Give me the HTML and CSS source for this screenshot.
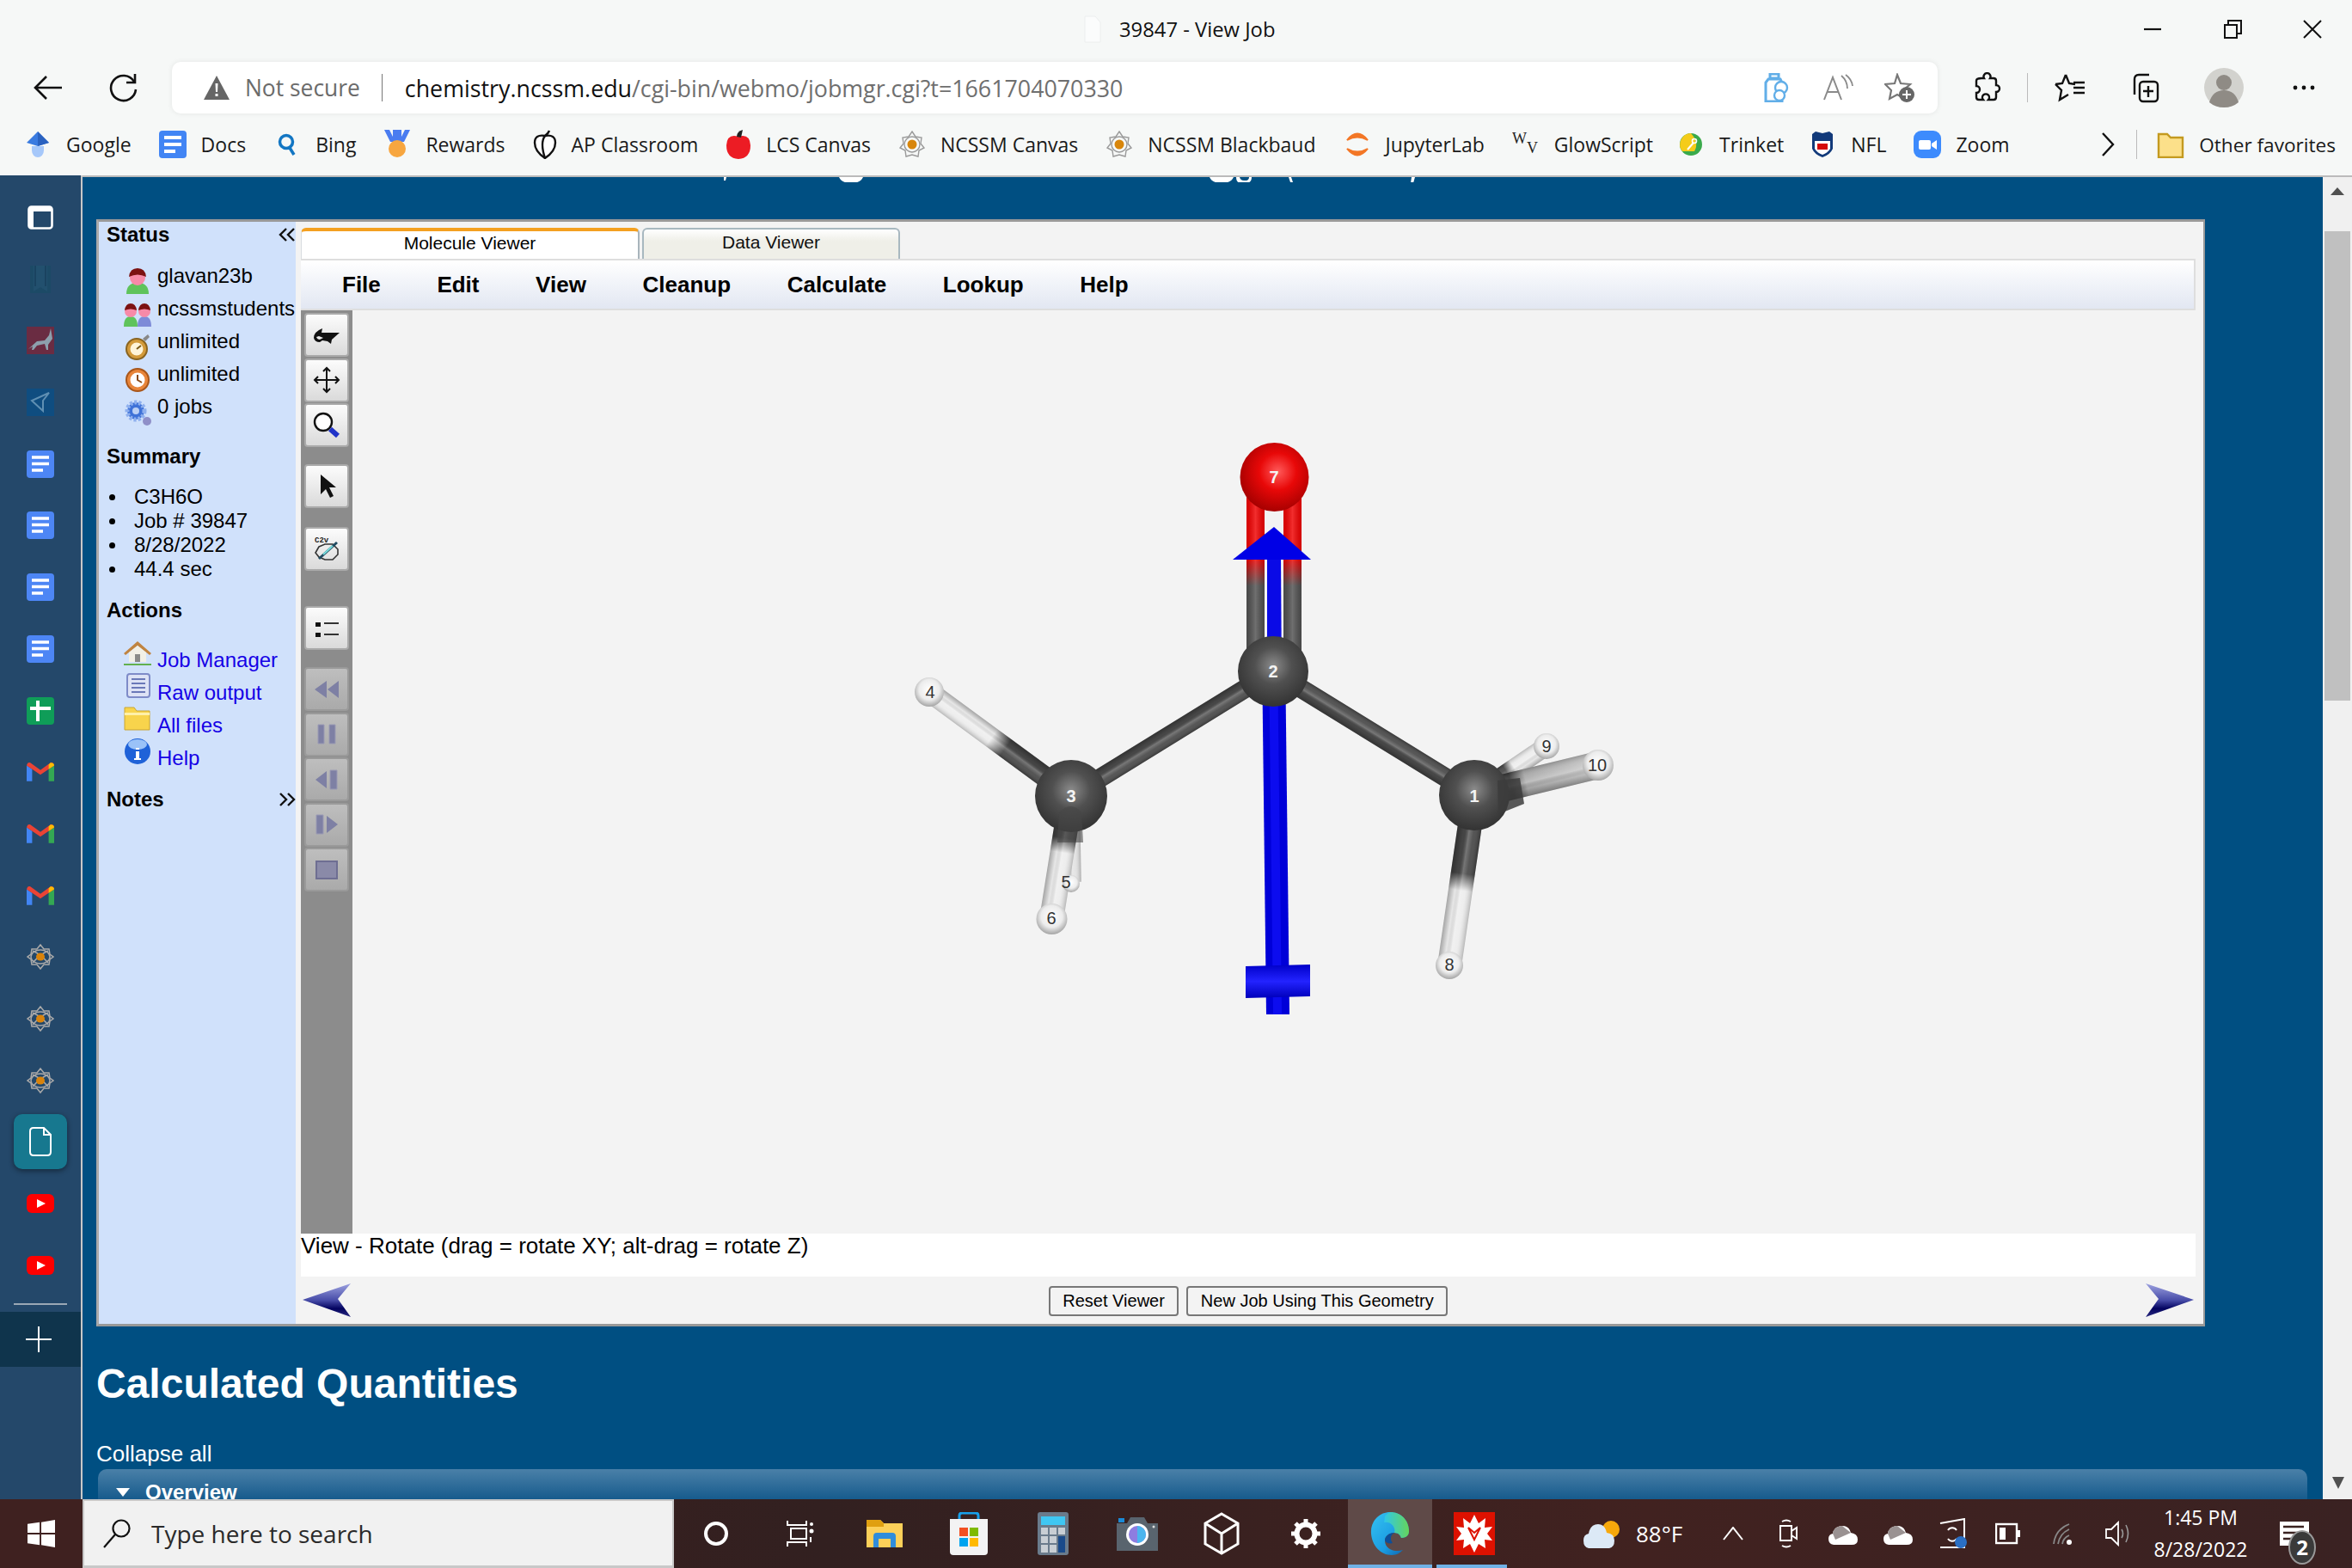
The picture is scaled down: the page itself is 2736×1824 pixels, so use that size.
FILE: index.html
```html
<!DOCTYPE html>
<html lang="en">
<head>
<meta charset="utf-8">
<title>39847 - View Job</title>
<link rel="stylesheet" href="styles.css">
</head>
<body>
<svg class="defs" width="0" height="0">
  <defs>
    <symbol id="docs" viewBox="0 0 32 32"><rect width="32" height="32" rx="4" fill="#4285f4"/><path d="M6 8h20M6 16h20M6 24h13" stroke="#fff" stroke-width="4"/></symbol>
    <symbol id="sdoc" viewBox="0 0 32 32"><rect width="32" height="32" rx="4" fill="#4d86f5"/><path d="M6 8h20M6 15.500h20M6 23h13" stroke="#fff" stroke-width="3.400"/></symbol>
    <symbol id="sheet" viewBox="0 0 32 32"><rect width="32" height="32" rx="4" fill="#0f9d58"/><path d="M4 13h24M13 4v24" stroke="#fff" stroke-width="4"/></symbol>
    <symbol id="gmail" viewBox="0 0 30 22"><path d="M0 21V4l6 4v13H2z" fill="#4285f4"/><path d="M24 21V8l6-4v17l-2 0z" fill="#34a853"/><path d="M0 4q1-4 4-3l11 8 11-8q3-1 4 3l-6 4-9 6-9-6z" fill="#ea4335"/><path d="M24 8l6-4q0-3-4-3l-2 2z" fill="#fbbc04"/></symbol>
    <symbol id="atom" viewBox="0 0 32 32"><g fill="none" stroke="#a9a9a9" stroke-width="1.500"><path d="M16 2l4 5 6 0 1 6 4 3-4 3-1 6-6 0-4 5-4-5-6 0-1-6-4-3 4-3 1-6 6 0z"/><ellipse cx="16" cy="16" rx="11" ry="8"/><path d="M7 9q9 4 18 14M25 9Q16 13 7 23"/></g><ellipse cx="16" cy="16" rx="5" ry="4.500" fill="#d9830b"/></symbol>
    <symbol id="yt" viewBox="0 0 32 22"><rect width="32" height="22" rx="6" fill="#f00"/><path d="M12 6l10 5-10 5z" fill="#fff"/></symbol>
    <symbol id="natom" viewBox="0 0 32 32"><g fill="none" stroke="#9a9a9a" stroke-width="1.400"><path d="M16 1l4 6 7 1-1 7 4 5-6 3-1 7-7-2-7 2-1-7-6-3 4-5-1-7 7-1z"/><circle cx="16" cy="16" r="9"/></g><circle cx="16" cy="16" r="5.500" fill="#d8860b"/></symbol>

    <linearGradient id="acrossC" x1="0" y1="0" x2="0" y2="1"><stop offset="0" stop-color="#000" stop-opacity=".22"/><stop offset=".3" stop-color="#fff" stop-opacity=".08"/><stop offset=".5" stop-color="#fff" stop-opacity=".26"/><stop offset=".72" stop-color="#000" stop-opacity=".02"/><stop offset="1" stop-color="#000" stop-opacity=".3"/></linearGradient>
    <linearGradient id="acrossV" x1="0" y1="0" x2="1" y2="0"><stop offset="0" stop-color="#000" stop-opacity=".1"/><stop offset=".5" stop-color="#fff" stop-opacity=".18"/><stop offset="1" stop-color="#000" stop-opacity=".12"/></linearGradient>
    <linearGradient id="h50" x1="0" y1="0" x2="1" y2="0"><stop offset=".46" stop-color="#464646"/><stop offset=".56" stop-color="#ececec"/></linearGradient>
    <linearGradient id="h38" x1="0" y1="0" x2="1" y2="0"><stop offset=".34" stop-color="#464646"/><stop offset=".46" stop-color="#ececec"/></linearGradient>
    <linearGradient id="h10" x1="0" y1="0" x2="1" y2="0"><stop offset=".3" stop-color="#3a3a3a"/><stop offset=".42" stop-color="#a8a8a8"/><stop offset="1" stop-color="#c8c8c8"/></linearGradient>
    <linearGradient id="dbl" x1="0" y1="0" x2="0" y2="1"><stop offset=".42" stop-color="#ef0000"/><stop offset=".56" stop-color="#505050"/></linearGradient>
    <radialGradient id="carbon" cx=".5" cy=".42" r=".58"><stop offset="0" stop-color="#8b8b8b"/><stop offset=".45" stop-color="#505050"/><stop offset="1" stop-color="#333"/></radialGradient>
    <radialGradient id="oxy" cx=".55" cy=".42" r=".6"><stop offset="0" stop-color="#ff5a5a"/><stop offset=".45" stop-color="#e80808"/><stop offset="1" stop-color="#a40000"/></radialGradient>
    <radialGradient id="hyd" cx=".5" cy=".42" r=".58"><stop offset="0" stop-color="#fff"/><stop offset=".6" stop-color="#ececec"/><stop offset="1" stop-color="#a4a4a4"/></radialGradient>
    <linearGradient id="cross" x1="0" y1="0" x2="0" y2="1"><stop offset="0" stop-color="#0000c8"/><stop offset=".5" stop-color="#2323ff"/><stop offset="1" stop-color="#0000bb"/></linearGradient>
    <linearGradient id="navy" x1="0" y1="0" x2="0" y2="1"><stop offset="0" stop-color="#9da2e0"/><stop offset=".5" stop-color="#474ca8"/><stop offset=".75" stop-color="#03035f"/><stop offset="1" stop-color="#2a2a80"/></linearGradient>
    <linearGradient id="edgeg" x1="0" y1="0" x2="1" y2="1"><stop offset="0" stop-color="#35c1f1"/><stop offset=".6" stop-color="#1b9de2"/><stop offset="1" stop-color="#0c59a4"/></linearGradient>
    <linearGradient id="edgeh" x1="0" y1="0" x2="1" y2="0"><stop offset="0" stop-color="#2fc7e8"/><stop offset="1" stop-color="#66d55a"/></linearGradient>
  </defs>
</svg>

<header class="titlebar">
  <div class="title-center">
    <svg class="page-ic" width="20" height="32" viewBox="0 0 20 32"><path d="M1 1h12l6 7v23H1z" fill="#fbfcfc" stroke="#eceeee"/></svg>
    <span>39847 - View Job</span>
  </div>
  <div class="winctl">
    <svg width="24" height="24" viewBox="0 0 24 24"><path d="M2 12h20" stroke="#111" stroke-width="2.200"/></svg>
    <svg width="24" height="24" viewBox="0 0 24 24"><path d="M3 7h14v15H3zM7 7V2h15v15h-5" fill="none" stroke="#111" stroke-width="2"/></svg>
    <svg width="24" height="24" viewBox="0 0 24 24"><path d="M2 2l20 20M22 2L2 22" stroke="#111" stroke-width="2"/></svg>
  </div>
</header>

<div class="addr-row">
  <svg class="nav-back" width="34" height="30" viewBox="0 0 34 30"><path d="M33 15H3M15 2L2 15l13 13" fill="none" stroke="#111" stroke-width="2.600"/></svg>
  <svg class="nav-reload" width="34" height="34" viewBox="0 0 34 34"><path d="M29 10A14.500 14.500 0 1 0 31 19" fill="none" stroke="#111" stroke-width="2.600"/><path d="M30 1v10H20" fill="none" stroke="#111" stroke-width="2.600"/></svg>
  <div class="addr-box">
    <svg width="32" height="30" viewBox="0 0 32 30"><path d="M16 1L31 29H1z" fill="#666"/><path d="M14.500 10h3l-.5 10h-2zM14.500 22h3v3h-3z" fill="#fff"/></svg>
    <span class="not-secure">Not secure</span>
    <span class="addr-sep"></span>
    <span class="url"><b class="host">chemistry.ncssm.edu</b>/cgi-bin/webmo/jobmgr.cgi?t=1661704070330</span>
    <div class="addr-icons">
      <svg width="32" height="34" viewBox="0 0 32 34"><path d="M8 1h10v5H8zM6 7h14l2 4v22H3V11z" fill="none" stroke="#61aee8" stroke-width="3"/><circle cx="21" cy="17" r="7" fill="#fff" stroke="#61aee8" stroke-width="2.400"/><circle cx="19" cy="26" r="6" fill="#fff" stroke="#61aee8" stroke-width="2.400"/></svg>
      <svg width="36" height="32" viewBox="0 0 36 32"><path d="M2 30L12 4l10 26M6 21h12" fill="none" stroke="#8a8a8a" stroke-width="2"/><path d="M22 2q7 6 7 15M27 1q7 5 8 13" fill="none" stroke="#8a8a8a" stroke-width="1.800"/></svg>
      <svg width="36" height="34" viewBox="0 0 36 34"><path d="M15 2l4 10 11 1-8 7 2 10-9-5-9 5 2-10-7-7 11-1z" fill="none" stroke="#777" stroke-width="2.200"/><circle cx="26" cy="25" r="9" fill="#666"/><path d="M26 20v10M21 25h10" stroke="#fff" stroke-width="2"/></svg>
    </div>
  </div>
  <div class="tools">
    <svg class="t-ext" width="34" height="36" viewBox="0 0 34 36"><path d="M11 7h3a4 4 0 1 1 7 0h4q3 0 3 3v5a4 4 0 1 1 0 8v6q0 3-3 3h-6a4 4 0 1 0-6 0H8q-3 0-3-3v-5a4 4 0 1 0 0-8v-6q0-3 6-3z" fill="none" stroke="#111" stroke-width="2.400"/></svg>
    <span class="t-sep"></span>
    <svg class="t-fav" width="38" height="34" viewBox="0 0 38 34"><path d="M13 2l4 10 7 1M1 13l7 7-2 11 10-6" fill="none" stroke="#111" stroke-width="2.400"/><path d="M13 2L9 12l-8 1M22 17h13M22 23h13M22 11h13" fill="none" stroke="#111" stroke-width="2.400"/></svg>
    <svg class="t-col" width="36" height="36" viewBox="0 0 36 36"><path d="M5 26V8q0-5 5-5h12" fill="none" stroke="#111" stroke-width="2.400"/><rect x="11" y="11" width="21" height="23" rx="4" fill="none" stroke="#111" stroke-width="2.400"/><path d="M21 16v13M15 22h12" stroke="#111" stroke-width="2.400"/></svg>
    <svg class="t-user" width="46" height="46" viewBox="0 0 46 46"><circle cx="23" cy="23" r="23" fill="#d2d2ce"/><circle cx="23" cy="17" r="9" fill="#8f8b85"/><path d="M6 40q4-14 17-14t17 14q-7 6-17 6T6 40z" fill="#8f8b85"/></svg>
    <svg class="t-more" width="28" height="6" viewBox="0 0 28 6"><circle cx="4" cy="3" r="2.400" fill="#111"/><circle cx="14" cy="3" r="2.400" fill="#111"/><circle cx="24" cy="3" r="2.400" fill="#111"/></svg>
  </div>
</div>

<nav class="bookmarks">
  <a class="bm"><svg width="32" height="32" viewBox="0 0 32 32"><path d="M16 1l13 13-13 4L3 14z" fill="#3a7be0"/><path d="M16 1l13 13-13 4z" fill="#2a62c0"/><path d="M9 18h14v5a7 8 0 0 1-14 0z" fill="#a6c8fa"/></svg><span>Google</span></a>
  <a class="bm"><svg width="32" height="32"><use href="#docs"/></svg><span>Docs</span></a>
  <a class="bm"><svg width="32" height="32" viewBox="-3 0 32 32"><circle cx="12" cy="13" r="7.500" fill="none" stroke="#1276c3" stroke-width="3.500"/><path d="M16 20l5 8" stroke="#1276c3" stroke-width="3.500"/></svg><span>Bing</span></a>
  <a class="bm"><svg width="32" height="34" viewBox="0 0 32 34"><path d="M1 0h6l7 14H8zM25 0h6l-7 14h-6zM11 0h10v14H11z" fill="#4a7cf0"/><circle cx="16" cy="22" r="10" fill="#f7a63f"/></svg><span>Rewards</span></a>
  <a class="bm"><svg width="28" height="34" viewBox="0 0 28 34"><path d="M14 7q12-2 12 8 0 10-12 18Q2 25 2 15 2 5 14 7z" fill="#fff" stroke="#111" stroke-width="2.400"/><path d="M14 7q-6 8 0 26M14 7q4-3 5-6" fill="none" stroke="#111" stroke-width="2.400"/></svg><span>AP Classroom</span></a>
  <a class="bm"><svg width="30" height="34" viewBox="0 0 30 34"><path d="M15 8q13-4 14 10 0 15-14 16Q1 33 1 18 2 4 15 8z" fill="#ec1c24"/><path d="M13 8q0-6 7-8l-2 9z" fill="#222"/></svg><span>LCS Canvas</span></a>
  <a class="bm"><svg width="32" height="32"><use href="#natom"/></svg><span>NCSSM Canvas</span></a>
  <a class="bm"><svg width="32" height="32"><use href="#natom"/></svg><span>NCSSM Blackbaud</span></a>
  <a class="bm"><svg width="32" height="32" viewBox="0 0 32 32"><path d="M4 11q12-15 24 0-12-7-24 0zM4 21q12 15 24 0-12 7-24 0z" fill="#f37726" stroke="#f37726" stroke-width="2"/></svg><span>JupyterLab</span></a>
  <a class="bm"><svg width="32" height="32" viewBox="0 0 32 32"><text x="0" y="15" class="wv">W</text><text x="17" y="26" class="wv">V</text></svg><span>GlowScript</span></a>
  <a class="bm bm-trinket"><svg width="32" height="32" viewBox="0 0 32 32"><circle cx="16" cy="16" r="13" fill="#3aaa4b"/><path d="M16 3a13 13 0 0 0-10 21h14q6-10-4-21z" fill="#f5cc19"/><path d="M12 22l7-8" stroke="#fff" stroke-width="2"/><circle cx="20" cy="12" r="2.500" fill="none" stroke="#fff" stroke-width="1.600"/></svg><span>Trinket</span></a>
  <a class="bm bm-nfl"><svg width="32" height="32" viewBox="-3 0 32 32"><path d="M1 4l4-3 8 2 8-2 4 3v17q-3 7-12 10Q4 28 1 21z" fill="#123a7a"/><path d="M4 12h18v9q-3 5-9 7-6-2-9-7z" fill="#fff"/><path d="M7 15h12v7H7z" fill="#d50a0a"/></svg><span>NFL</span></a>
  <a class="bm"><svg width="32" height="32" viewBox="0 0 32 32"><rect width="32" height="32" rx="9" fill="#3d8bfd"/><rect x="6" y="11" width="14" height="11" rx="2" fill="#fff"/><path d="M21 15l6-4v11l-6-4z" fill="#fff"/></svg><span>Zoom</span></a>
  <span class="bm-more">
    <svg width="16" height="30" viewBox="0 0 16 30"><path d="M2 2l12 13L2 28" fill="none" stroke="#111" stroke-width="2.400"/></svg>
    <span class="bm-sep"></span>
    <a class="bm bm-other"><svg width="32" height="32" viewBox="0 0 32 32"><path d="M2 4h10l4 4h14v23H2z" fill="#fce08a" stroke="#c49a20" stroke-width="2.400"/></svg><span>Other favorites</span></a>
  </span>
</nav>

<div class="main">
  <aside class="side">
    <div class="side-list">
      <svg width="32" height="32" viewBox="0 0 32 32"><rect x="2.500" y="3.500" width="27" height="25" rx="3" fill="none" stroke="#fff" stroke-width="2.600"/><path d="M2 4h28v5H8v19H2z" fill="#fff"/></svg>
      <svg width="32" height="32" viewBox="0 0 32 32"><rect x="4" width="24" height="32" fill="#1c4a66"/><path d="M8 0v30l8-5 8 5V0" fill="#22506e"/><path d="M10 0v24M22 0v24" stroke="#1a4360" stroke-width="2"/></svg>
      <svg width="32" height="32" viewBox="0 0 32 32"><rect width="32" height="32" fill="#6a2c42"/><path d="M2 26l10-9 9-1 5-6 2-8 2 12-5 7v6h-2l-2-7-9 2-4 5H6l1-4z" fill="#8da0ad"/></svg>
      <svg width="32" height="32" viewBox="0 0 32 32"><rect width="32" height="32" fill="#0f4d80"/><path d="M26 5L6 14l13 12V14z" fill="none" stroke="#5f8fb2" stroke-width="2"/></svg>
      <svg width="32" height="32"><use href="#sdoc"/></svg>
      <svg width="32" height="32"><use href="#sdoc"/></svg>
      <svg width="32" height="32"><use href="#sdoc"/></svg>
      <svg width="32" height="32"><use href="#sdoc"/></svg>
      <svg width="32" height="32"><use href="#sheet"/></svg>
      <svg width="32" height="32" viewBox="0 0 30 30"><use href="#gmail" y="4" width="30" height="22"/></svg>
      <svg width="32" height="32" viewBox="0 0 30 30"><use href="#gmail" y="4" width="30" height="22"/></svg>
      <svg width="32" height="32" viewBox="0 0 30 30"><use href="#gmail" y="4" width="30" height="22"/></svg>
      <svg width="32" height="32"><use href="#atom"/></svg>
      <svg width="32" height="32"><use href="#atom"/></svg>
      <svg width="32" height="32"><use href="#atom"/></svg>
      <div class="side-active"><svg width="26" height="34" viewBox="0 0 26 34"><path d="M5 1h12l8 8v20q0 4-4 4H5q-4 0-4-4V5q0-4 4-4zM17 1v8h8" fill="none" stroke="#fff" stroke-width="2"/></svg></div>
      <svg width="32" height="32" viewBox="0 0 32 32"><use href="#yt" y="5" width="32" height="22"/></svg>
      <svg width="32" height="32" viewBox="0 0 32 32"><use href="#yt" y="5" width="32" height="22"/></svg>
    </div>
    <div class="side-rule"></div>
    <div class="side-add"><svg width="30" height="30" viewBox="0 0 30 30"><path d="M15 0v30M0 15h30" stroke="#fff" stroke-width="2"/></svg></div>
  </aside>

  <div class="content">
    <main class="page">
      <svg class="cutoff" width="2000" height="6" viewBox="0 0 2000 6"><path d="M730 0h3l-1 4h-2zM864 0h28q-3 7-14 7T864 0zM1295 0h28q-3 7-14 7t-14-7zM1326 0h4q1 4 5 4h3q3-1 3-4h3q0 7-7 7h-5q-6 0-6-7zM1387 0h3l2 6h-3zM1530 0h4l-2 7h-3z" fill="#fff"/></svg>

      <section class="panel">
        <div class="leftcol">
          <div class="lc-head"><span>Status</span><svg width="20" height="16" viewBox="0 0 20 16"><path d="M9 1L2 8l7 7M18 1l-7 7 7 7" fill="none" stroke="#111" stroke-width="2.400"/></svg></div>
          <div class="lc-rows lc-first">
            <div class="lc-row"><svg class="lc-ic low" viewBox="0 0 32 32"><path d="M3 31q0-13 13-13t13 13z" fill="#5fc35b"/><circle cx="16" cy="12" r="9" fill="#f78aa8"/><path d="M6 11q1-10 10-10t10 10q-10-5-20 0z" fill="#7c1212"/></svg><span>glavan23b</span></div>
            <div class="lc-row"><svg class="lc-ic low" viewBox="0 0 32 32"><path d="M0 31q0-12 8-12t8 12z" fill="#5fc35b"/><path d="M16 31q0-12 8-12t8 12z" fill="#7e8bd8"/><circle cx="8" cy="13" r="7" fill="#f78aa8"/><circle cx="24" cy="13" r="7" fill="#f78aa8"/><path d="M1 12q1-8 7-8t7 8q-7-3-14 0zM17 12q1-8 7-8t7 8q-7-3-14 0z" fill="#7c1212"/></svg><span>ncssmstudents</span></div>
            <div class="lc-row"><svg class="lc-ic low" viewBox="0 0 32 32"><circle cx="15" cy="19" r="12" fill="#d39a3a" stroke="#8a6420" stroke-width="2"/><circle cx="15" cy="19" r="7.500" fill="#fff4d8"/><path d="M15 19l5-4" stroke="#7a5a18" stroke-width="2"/><path d="M22 7l6-5 2 3-5 5z" fill="#888"/></svg><span>unlimited</span></div>
            <div class="lc-row"><svg class="lc-ic low" viewBox="0 0 32 32"><circle cx="16" cy="17" r="13" fill="#e8853a" stroke="#a8561a" stroke-width="2"/><circle cx="16" cy="17" r="8.500" fill="#fff"/><path d="M16 11v6l5 3" stroke="#8a4a18" stroke-width="2" fill="none"/></svg><span>unlimited</span></div>
            <div class="lc-row"><svg class="lc-ic low" viewBox="0 0 32 32"><circle cx="14" cy="15" r="10" fill="#3f72d8" stroke="#8fb0ee" stroke-width="5" stroke-dasharray="3 2"/><circle cx="14" cy="15" r="4" fill="#bcd0f5"/><circle cx="27" cy="27" r="5" fill="#8f8fc8"/></svg><span>0 jobs</span></div>
          </div>
          <div class="lc-head lc-sum"><span>Summary</span></div>
          <ul class="lc-list">
            <li>C3H6O</li>
            <li>Job # 39847</li>
            <li>8/28/2022</li>
            <li>44.4 sec</li>
          </ul>
          <div class="lc-head lc-act"><span>Actions</span></div>
          <div class="lc-rows lc-actions">
            <div class="lc-row"><svg class="lc-ic high" viewBox="0 0 32 32"><path d="M0 16L16 2l16 14-2 2-14-11L2 18z" fill="#c08440"/><path d="M6 15l10-8 10 8v11H6z" fill="#f2f0e6"/><rect x="13" y="17" width="6" height="9" fill="#8a8a88"/><path d="M0 28h32v2H0z" fill="#63b04e"/></svg><a>Job Manager</a></div>
            <div class="lc-row"><svg class="lc-ic high" viewBox="0 0 32 32"><rect x="4" y="2" width="26" height="27" rx="3" fill="#dde2f5" stroke="#7e8bc8" stroke-width="2"/><path d="M9 8h16M9 13h16M9 18h16M9 23h16" stroke="#6a78b8" stroke-width="2"/></svg><a>Raw output</a></div>
            <div class="lc-row"><svg class="lc-ic high" viewBox="0 0 32 32"><path d="M1 8V3h11l3 4h15v22H1z" fill="#f8d44c" stroke="#c9a531"/><path d="M1 9h29v3H1z" fill="#fff0a8"/></svg><a>All files</a></div>
            <div class="lc-row"><svg class="lc-ic high" viewBox="0 0 32 32"><circle cx="16" cy="16" r="15" fill="#1f62d8"/><ellipse cx="16" cy="8" rx="11" ry="6" fill="#9ac2f8"/><path d="M14 12h4v2h-4zM14 16h4v8h2v2h-8v-2h2z" fill="#fff"/></svg><a>Help</a></div>
          </div>
          <div class="lc-head lc-notes"><span>Notes</span><svg width="20" height="16" viewBox="0 0 20 16"><path d="M2 1l7 7-7 7M11 1l7 7-7 7" fill="none" stroke="#111" stroke-width="2.400"/></svg></div>
        </div>

        <div class="viewer">
          <div class="tabs">
            <div class="tab tab-on">Molecule Viewer</div>
            <div class="tab tab-off">Data Viewer</div>
          </div>
          <div class="menu">
            <span>File</span><span>Edit</span><span>View</span><span>Cleanup</span><span>Calculate</span><span>Lookup</span><span>Help</span>
          </div>
          <div class="stage">
            <div class="toolbar">
              <div class="tb-group">
                <button class="tb"><svg viewBox="0 0 32 24"><path d="M1 15q0-7 10-11l-1 5 21 0-9 8-1 5-4-3-6-1-3 2q-6 0-7-5zM4 14q1 3 4 3l4-2-5-2z" fill="#111" fill-rule="evenodd"/></svg></button>
                <button class="tb"><svg viewBox="0 0 32 32"><path d="M16 2v28M2 16h28M12 6l4-4 4 4M12 26l4 4 4-4M6 12l-4 4 4 4M26 12l4 4-4 4" fill="none" stroke="#111" stroke-width="2"/></svg></button>
                <button class="tb"><svg viewBox="0 0 32 32"><circle cx="12" cy="12" r="10" fill="#fff" stroke="#111" stroke-width="2.400"/><path d="M20 20l9 8" stroke="#2033c8" stroke-width="6"/></svg></button>
              </div>
              <div class="tb-group tb-g2"><button class="tb"><svg viewBox="0 0 32 32"><path d="M9 2v23l6-6 5 10 4-2-5-10h8z" fill="#111"/></svg></button></div>
              <div class="tb-group tb-g3"><button class="tb"><svg viewBox="0 0 32 32"><text x="2" y="8" class="c2v">C2v</text><path d="M7 13l7-3h9l6 6v6l-6 6h-9l-7-3-4-5z" fill="none" stroke="#333" stroke-width="1.600"/><path d="M7 27l21-19" stroke="#1f4a60" stroke-width="3"/><path d="M12 22l11-10" stroke="#7dd" stroke-width="2"/></svg></button></div>
              <div class="tb-group tb-g4"><button class="tb"><svg viewBox="0 0 32 32"><path d="M3 9h6v5H3zM3 21h6v5H3z" fill="#111"/><path d="M13 10h17M13 23h17" stroke="#333" stroke-width="2"/></svg></button></div>
              <div class="tb-group tb-g5">
                <button class="tb off"><svg viewBox="0 0 32 32"><path d="M16 6v20L2 16zM30 6v20L17 16z" fill="#7e80a4"/></svg></button>
                <button class="tb off"><svg viewBox="0 0 32 32"><path d="M6 5h7v22H6zM19 5h7v22h-7z" fill="#7e80a4" stroke="#9a9ab4"/></svg></button>
                <button class="tb off"><svg viewBox="0 0 32 32"><path d="M16 6v20L3 16z" fill="#7e80a4"/><path d="M20 5h8v22h-8z" fill="#7e80a4" stroke="#9a9ab4"/></svg></button>
                <button class="tb off"><svg viewBox="0 0 32 32"><path d="M4 5h8v22H4z" fill="#7e80a4" stroke="#9a9ab4"/><path d="M16 6v20l13-10z" fill="#7e80a4"/></svg></button>
                <button class="tb off"><svg viewBox="0 0 32 32"><rect x="4" y="6" width="24" height="20" fill="#8a8aa8" stroke="#6e6e92" stroke-width="2"/></svg></button>
              </div>
            </div>
            <div class="canvas">
              <svg class="mol" viewBox="410 361 2146 1074" width="2146" height="1074">
                <g transform="translate(1246 926) rotate(216.300)"><rect y="-12" width="205" height="24" fill="url(#h50)"/><rect y="-12" width="205" height="24" fill="url(#acrossC)"/></g>
                <g transform="translate(1246 926) rotate(89)"><rect y="-10" width="100" height="20" fill="#e0e0e0"/><rect y="-10" width="100" height="20" fill="url(#acrossC)"/></g>
                <g transform="translate(1246 926) rotate(99.100)"><rect y="-14" width="145" height="28" fill="url(#h38)"/><rect y="-14" width="145" height="28" fill="url(#acrossC)"/></g>
                <g transform="translate(1715 925) rotate(98.300)"><rect y="-14" width="200" height="28" fill="url(#h50)"/><rect y="-14" width="200" height="28" fill="url(#acrossC)"/></g>
                <g transform="translate(1715 925) rotate(-34.200)"><rect y="-11" width="101" height="22" fill="url(#h50)"/><rect y="-11" width="101" height="22" fill="url(#acrossC)"/></g>
                <g transform="translate(1715 925) rotate(-13.700)"><rect y="-16" width="148" height="32" fill="url(#h10)"/><rect y="-16" width="148" height="32" fill="url(#acrossC)"/></g>
                <g transform="translate(1481 781) rotate(148.330)"><rect y="-11" width="276" height="22" fill="#484848"/><rect y="-11" width="276" height="22" fill="url(#acrossC)"/></g>
                <g transform="translate(1481 781) rotate(31.600)"><rect y="-11" width="275" height="22" fill="#484848"/><rect y="-11" width="275" height="22" fill="url(#acrossC)"/></g>
                <rect x="1450" y="555" width="21" height="226" fill="url(#dbl)"/><rect x="1450" y="555" width="21" height="226" fill="url(#acrossV)"/>
                <rect x="1493" y="555" width="21" height="226" fill="url(#dbl)"/><rect x="1493" y="555" width="21" height="226" fill="url(#acrossV)"/>
                <path d="M1474 650h16l1 150h-17z" fill="#0a0ae6"/>
                <path d="M1468 760h27l5 420h-27z" fill="#0000d8"/>
                <path d="M1476 760h10l5 420h-10z" fill="#1414ff" opacity=".6"/>
                <path d="M1449 1124l75-2v37l-75 2z" fill="url(#cross)"/>
                <path d="M1482 613l43 38h-91z" fill="#0000e6"/>
                <circle cx="1482.500" cy="555" r="40" fill="url(#oxy)"/>
                <circle cx="1481" cy="781" r="41" fill="url(#carbon)"/>
                <circle cx="1246" cy="926" r="42" fill="url(#carbon)"/>
                <path d="M1232 945q14-14 26 0l2 35h-30z" fill="#464646" opacity=".6"/>
                <circle cx="1715" cy="925" r="41" fill="url(#carbon)"/>
                <path d="M1742 908l26-3 5 30-30 12z" fill="#3c3c3c" opacity=".85"/>
                <circle cx="1081" cy="805" r="17" fill="url(#hyd)"/>
                <circle cx="1246" cy="1028" r="10" fill="url(#hyd)"/>
                <circle cx="1223.500" cy="1069" r="18" fill="url(#hyd)"/>
                <circle cx="1686" cy="1123" r="16" fill="url(#hyd)"/>
                <circle cx="1799" cy="868" r="15" fill="url(#hyd)"/>
                <circle cx="1859" cy="890" r="18" fill="url(#hyd)"/>
                <text x="1482" y="562" class="al al-w">7</text>
                <text x="1481" y="788" class="al al-w">2</text>
                <text x="1246" y="933" class="al al-w">3</text>
                <text x="1715" y="933" class="al al-w">1</text>
                <text x="1082" y="812" class="al al-d">4</text>
                <text x="1240" y="1033" class="al al-d">5</text>
                <text x="1223" y="1075" class="al al-d">6</text>
                <text x="1686" y="1129" class="al al-d">8</text>
                <text x="1799" y="875" class="al al-d">9</text>
                <text x="1858" y="897" class="al al-d">10</text>
              </svg>
            </div>
          </div>
          <div class="statusline">View - Rotate (drag = rotate XY; alt-drag = rotate Z)</div>
          <div class="footer">
            <svg width="56" height="40" viewBox="0 0 56 40"><path d="M0 19L56 0 41 18l15 21z" fill="url(#navy)"/></svg>
            <div class="btns"><button class="btn">Reset Viewer</button><button class="btn">New Job Using This Geometry</button></div>
            <svg width="56" height="40" viewBox="0 0 56 40"><path d="M56 19L0 0l15 18L0 39z" fill="url(#navy)"/></svg>
          </div>
        </div>
      </section>

      <h2 class="calc">Calculated Quantities</h2>
      <a class="collapse">Collapse all</a>
      <div class="accordion"><svg width="16" height="10" viewBox="0 0 16 10"><path d="M0 0h16L8 10z" fill="#fff"/></svg><span>Overview</span></div>
    </main>
    <div class="scrollbar">
      <svg class="sb-up" width="16" height="9" viewBox="0 0 16 9"><path d="M8 0l8 9H0z" fill="#505050"/></svg>
      <div class="sb-thumb"></div>
      <svg class="sb-down" width="14" height="14" viewBox="0 0 14 14"><path d="M0 0h14L7 14z" fill="#505050"/></svg>
    </div>
  </div>
</div>

<footer class="taskbar">
  <div class="start"><svg width="32" height="32" viewBox="0 0 34 34"><path d="M0 5l15-2v13H0zM17 3l17-3v16H17zM0 18h15v13L0 29zM17 18h17v16l-17-3z" fill="#fff"/></svg></div>
  <div class="search">
    <svg width="34" height="36" viewBox="0 0 34 36"><circle cx="22" cy="12" r="9.500" fill="none" stroke="#111" stroke-width="2.200"/><path d="M15 19L2 34" stroke="#111" stroke-width="2.200"/></svg>
    <span>Type here to search</span>
  </div>
  <div class="tb-apps">
    <div class="app"><svg width="30" height="30" viewBox="0 0 30 30"><circle cx="15" cy="15" r="12" fill="none" stroke="#fff" stroke-width="4"/></svg></div>
    <div class="app"><svg width="32" height="32" viewBox="0 0 32 32"><path d="M1 1v5h22V1M5 10h18v12H5zM1 31v-5h22v5" fill="none" stroke="#fff" stroke-width="2"/><circle cx="29" cy="5" r="2" fill="#fff"/><circle cx="29" cy="13" r="2.500" fill="#fff"/><path d="M28 20v6" stroke="#fff" stroke-width="2"/></svg></div>
    <div class="app"><svg width="42" height="36" viewBox="0 0 42 36"><path d="M0 2h16l4 4h22v28H0z" fill="#fcd059"/><path d="M0 2h16l4 4v4H0z" fill="#e0a010"/><path d="M8 34V21q0-4 4-4h18q4 0 4 4v13h-6V24H14v10z" fill="#2f8ddb"/><rect x="16" y="25" width="10" height="9" fill="#fcd059"/></svg></div>
    <div class="app"><svg width="46" height="50" viewBox="0 0 46 50"><path d="M12 8V4q0-3 3-3h16q3 0 3 3v4" fill="none" stroke="#18a0ea" stroke-width="3"/><path d="M1 8h44v38q0 4-4 4H5q-4 0-4-4z" fill="#f3f3f3"/><path d="M12 18h10v10H12z" fill="#f25022"/><path d="M24 18h10v10H24z" fill="#7fba00"/><path d="M12 30h10v10H12z" fill="#00a4ef"/><path d="M24 30h10v10H24z" fill="#ffb900"/></svg></div>
    <div class="app"><svg width="36" height="50" viewBox="0 0 36 50"><rect width="36" height="50" rx="3" fill="#6a7b8c"/><rect x="4" y="5" width="28" height="10" fill="#3fc7f3"/><g fill="#c8ced4"><rect x="4" y="18" width="8" height="8"/><rect x="14" y="18" width="8" height="8"/><rect x="24" y="18" width="8" height="8"/><rect x="4" y="28" width="8" height="8"/><rect x="14" y="28" width="8" height="8"/><rect x="4" y="38" width="8" height="9"/><rect x="14" y="38" width="8" height="9"/></g><rect x="24" y="28" width="8" height="19" fill="#1a4a8a"/></svg></div>
    <div class="app"><svg width="48" height="40" viewBox="0 0 48 40"><path d="M0 8h12l4-7h16l4 7h12v32H0z" fill="#59646e"/><rect x="2" y="2" width="7" height="5" fill="#1b8ad6"/><circle cx="24" cy="21" r="13" fill="#fff"/><circle cx="24" cy="21" r="10" fill="#8d7de0"/><path d="M24 11a10 10 0 0 1 0 20z" fill="#4ab5ee"/><circle cx="43" cy="12" r="1.500" fill="#ddd"/></svg></div>
    <div class="app"><svg width="42" height="50" viewBox="0 0 42 50"><path d="M21 2l19 11v24L21 48 2 37V13zM2 13l19 12 19-12M21 25v23" fill="none" stroke="#fff" stroke-width="3"/></svg></div>
    <div class="app"><svg width="36" height="36" viewBox="0 0 36 36"><circle cx="18" cy="18" r="10.500" fill="none" stroke="#fff" stroke-width="6"/><path d="M18 1v7M18 28v7M1 18h7M28 18h7M6 6l5 5M25 25l5 5M30 6l-5 5M11 25l-5 5" stroke="#fff" stroke-width="5"/></svg></div>
    <div class="app app-on"><svg width="46" height="50" viewBox="0 0 46 50"><path d="M23 0C10 0 0 11 1 25c1 14 11 25 24 25 6 0 10-3 13-6-8 3-21 0-21-11 0-5 5-9 11-9 5 0 7 3 8 6 7 0 9-4 9-8C45 9 35 0 23 0z" fill="url(#edgeg)"/><path d="M23 0c12 0 22 9 22 22 0 4-2 8-9 8-1-3-3-6-8-6 2-6-4-14-12-12C18 6 14 5 23 0z" fill="url(#edgeh)"/><path d="M17 33c0-5 5-9 11-9-5 3-5 8-2 12-3 1-8 0-9-3z" fill="#0b4f9a"/></svg></div>
    <div class="app app-run"><svg width="48" height="50" viewBox="0 0 48 50"><rect width="48" height="50" fill="#dd1100"/><path d="M24 3l5 10 8-6-1 11 9-1-6 8 6 8-9-1 1 10-8-5-5 10-5-10-8 5 1-10-9 1 6-8-6-8 9 1-1-11 8 6z" fill="#fff"/><path d="M17 18l7 14 7-14-7 6z" fill="none" stroke="#dd1100" stroke-width="2"/></svg></div>
  </div>
  <div class="tray">
    <div class="weather"><svg width="42" height="34" viewBox="0 0 42 34"><circle cx="32" cy="12" r="10" fill="#f7a80b"/><path d="M6 34q-6-1-6-9 0-7 6-8 2-11 11-11 8 0 10 10 9 1 9 9 0 8-6 9z" fill="#dce9f6"/></svg><span>88°F</span></div>
    <div class="slot"><svg width="24" height="16" viewBox="0 0 24 16"><path d="M1 15L12 1l11 14" fill="none" stroke="#fff" stroke-width="2"/></svg></div>
    <div class="slot"><svg width="24" height="34" viewBox="0 0 24 34"><path d="M3 8h13v17H3zM16 14l6-4v13l-6-4M5 3q5-3 10 0M5 31q5 3 10 0" fill="none" stroke="#fff" stroke-width="2"/></svg></div>
    <div class="slot"><svg width="34" height="26" viewBox="0 0 34 26"><path d="M6 26q-6-1-6-7 0-5 5-6 1-8 11-9 8 0 10 8 8 1 8 8 0 6-7 6z" fill="#fff"/><path d="M16 4l10 8-18 8-3-7q1-8 11-9z" fill="#9a9292"/></svg></div>
    <div class="slot"><svg width="34" height="26" viewBox="0 0 34 26"><path d="M6 26q-6-1-6-7 0-5 5-6 1-8 11-9 8 0 10 8 8 1 8 8 0 6-7 6z" fill="#fff"/><path d="M16 4l10 8-18 8-3-7q1-8 11-9z" fill="#9a9292"/></svg></div>
    <div class="slot"><svg width="34" height="36" viewBox="0 0 34 36"><path d="M2 6l28-5v33H2" fill="none" stroke="#fff" stroke-width="2"/><path d="M11 14a6 6 0 0 1 10 0M21 24a6 6 0 0 1-10 0" fill="none" stroke="#fff" stroke-width="2"/><circle cx="26" cy="28" r="7" fill="#2a6fc4"/></svg></div>
    <div class="slot"><svg width="30" height="26" viewBox="0 0 30 26"><rect x="1" y="2" width="24" height="22" fill="none" stroke="#fff" stroke-width="2.400"/><rect x="5" y="6" width="7" height="14" fill="#fff"/><rect x="26" y="9" width="3" height="8" fill="#fff"/></svg></div>
    <div class="slot"><svg width="26" height="26" viewBox="0 0 26 26"><path d="M2 25Q4 8 20 2M7 25Q9 13 20 8M12 25q1-7 8-10" fill="none" stroke="#888" stroke-width="1.800"/><circle cx="20" cy="23" r="3" fill="#fff"/></svg></div>
    <div class="slot"><svg width="32" height="30" viewBox="0 0 32 30"><path d="M2 10h6l8-8v26l-8-8H2z" fill="none" stroke="#fff" stroke-width="1.800"/><path d="M20 10q3 5 0 10M25 5q5 10 0 20" fill="none" stroke="#999" stroke-width="1.600"/></svg></div>
    <div class="clock"><div>1:45 PM</div><div>8/28/2022</div></div>
    <div class="notif"><svg width="34" height="28" viewBox="0 0 34 28"><rect width="34" height="28" fill="#fff"/><path d="M4 6h24M4 13h24M4 20h14" stroke="#3a2220" stroke-width="2.400"/></svg><span class="badge">2</span></div>
  </div>
</footer>
</body>
</html>
```

FILE: styles.css
```css
* { box-sizing: border-box; }
html, body { margin: 0; padding: 0; }
body {
  width: 2736px; height: 1824px; overflow: hidden;
  display: flex; flex-direction: column;
  background: #f6f8f7;
  font-family: "Open Sans", "Noto Sans", sans-serif;
  color: #111;
}
svg { display: block; flex: none; }
.defs { position: absolute; }

/* Browser chrome */
.titlebar { height: 68px; flex: none; position: relative; display: flex; align-items: center; justify-content: flex-end; }
.title-center { position: absolute; left: 1261px; top: 18px; display: flex; align-items: center; gap: 21px; font-size: 23.800px; line-height: 30px; }
.winctl { display: flex; gap: 69px; padding-right: 34px; }

.addr-row { height: 68px; flex: none; display: flex; align-items: center; }
.nav-back { margin-left: 39px; }
.nav-reload { margin-left: 54px; }
.addr-box {
  margin-left: 39px; width: 2054px; height: 60px; background: #fff; border-radius: 10px;
  box-shadow: 0 0 6px rgba(0,0,0,.08);
  display: flex; align-items: center; padding-left: 36px;
}
.not-secure { margin-left: 17px; font-size: 26.400px; color: #6b6b6b; }
.addr-sep { width: 1px; height: 32px; background: #777; margin: 0 26px 0 25px; }
.url { font-size: 26.800px; color: #6f6f6f; white-space: nowrap; }
.host { font-weight: 400; color: #111; }
.addr-icons { margin-left: auto; display: flex; align-items: center; gap: 36.500px; padding-right: 26px; }
.tools { flex: 1; display: flex; align-items: center; padding-left: 40px; }
.t-sep { width: 1px; height: 34px; background: #bbb; margin: 0 31px 0 30px; }
.t-col { margin-left: 50px; }
.t-user { margin-left: 50px; }
.t-more { margin-left: 56px; }

.bookmarks { height: 68px; flex: none; display: flex; align-items: center; padding: 0 0 4px 28px; gap: 32px; font-size: 23px; position: relative; }
.bm { display: flex; align-items: center; gap: 17px; white-space: nowrap; color: #1a1a1a; }
.bm-trinket { margin-left: -4px; }
.bm-nfl { margin-left: -3px; }
.bm-more { margin-left: auto; display: flex; align-items: center; padding-right: 19px; }
.bm-other { font-size: 22.600px; }
.bm-sep { width: 1px; height: 34px; background: #bbb; margin: 0 23px 0 25px; }
.wv { font-family: "Liberation Serif", serif; font-size: 18px; fill: #222; }

/* Main area */
.main { flex: 1; display: flex; min-height: 0; }
.side { width: 96px; flex: none; background: #24486a; border-right: 2px solid #c8c8c8; display: flex; flex-direction: column; align-items: flex-start; }
.side-list { display: flex; flex-direction: column; align-items: center; width: 94px; padding-top: 33px; gap: 39.700px; }
.side-active { width: 62px; height: 64px; background: #17788f; border-radius: 10px; box-shadow: 0 2px 6px rgba(0,0,0,.45); display: flex; align-items: center; justify-content: center; margin: -16px 0; }
.side-rule { width: 62px; height: 2px; background: #9aa8b5; margin: 28px 0 8px 16px; }
.side-add { width: 94px; height: 64px; background: #0f344c; display: flex; align-items: center; justify-content: center; padding-right: 4px; }

.content { flex: 1; display: flex; min-width: 0; border-top: 2px solid #bbb; }
.page { flex: 1; background: #004f82; padding-left: 16px; overflow: hidden; min-width: 0; }
.cutoff { margin-bottom: 43px; }
.scrollbar { width: 34px; flex: none; background: #f0f0f0; display: flex; flex-direction: column; align-items: center; position: relative; }
.sb-up { margin-top: 12px; }
.sb-thumb { width: 30px; height: 546px; background: #c0c0c0; margin-top: 42px; }
.sb-down { position: absolute; bottom: 12px; left: 11px; }

/* Panel */
.panel {
  width: 2453px; height: 1288px; background: #f3f3f3; display: flex;
  border: 3px solid #999; border-left-color: #aaa; border-right-width: 2px; border-bottom-color: #999;
  font-family: "Liberation Sans", Arial, sans-serif;
}
.leftcol { width: 229px; flex: none; background: #d0e1fb; padding: 1px 0 0 9px; font-size: 24px; line-height: 28px; color: #000; }
.lc-head { display: flex; justify-content: space-between; align-items: center; height: 28px; font-weight: 700; }
.lc-rows { padding-left: 20px; }
.lc-first { margin-top: 15px; }
.lc-row { display: flex; height: 38px; align-items: center; gap: 7px; white-space: nowrap; }
.lc-ic { width: 32px; height: 32px; flex: none; }
.low { transform: translateY(6px); }
.high { transform: translateY(-8px); }
.lc-row a { color: #1500e6; }
.lc-sum { margin-top: 25px; }
.lc-list { margin: 19px 0 0; padding: 0 0 0 3px; list-style: none; }
.lc-list li { height: 28px; display: flex; align-items: center; gap: 22px; }
.lc-list li::before { content: ""; width: 7px; height: 7px; border-radius: 50%; background: #000; flex: none; }
.lc-act { margin-top: 20px; }
.lc-actions { margin-top: 25px; }
.lc-notes { margin-top: 15px; }

.viewer { flex: 1; min-width: 0; padding: 7px 9px 0 6px; display: flex; flex-direction: column; }
.tabs { display: flex; gap: 3px; height: 36px; flex: none; font-size: 21px; }
.tab { border-radius: 6px 6px 0 0; display: flex; align-items: center; justify-content: center; padding-bottom: 4px; }
.tab-on { width: 394px; background: #fff; border-top: 4px solid #f4a020; border-right: 2px solid #a8b4bc; border-left: 1px solid #d8dde0; color: #000; }
.tab-off { width: 300px; background: linear-gradient(#ffffff, #efefe8 40%); border: 2px solid #a8b8c0; border-bottom: none; color: #111; }
.menu {
  height: 60px; flex: none; background: linear-gradient(#ffffff, #e2e7f2); border: 2px solid #dedede; border-left: none;
  display: flex; align-items: center; gap: 65.600px; padding-left: 48px; font-size: 26px; font-weight: 700; color: #000;
}
.stage { flex: 1; display: flex; min-height: 0; }
.toolbar { width: 60px; flex: none; background: #8c8c8c; padding: 3px 4px 0; }
.tb-group { display: flex; flex-direction: column; gap: 1.500px; }
.tb-g2 { margin-top: 20px; }
.tb-g3 { margin-top: 22px; }
.tb-g4 { margin-top: 41px; }
.tb-g5 { margin-top: 20px; }
.tb { display: flex; align-items: center; justify-content: center; width: 52px; height: 51px; padding: 0; border: 2px solid #aaa; border-radius: 4px; background: linear-gradient(#fcfcfc, #dadada); }
.tb svg { width: 32px; height: 32px; }
.tb.off { background: linear-gradient(#bebebe, #aaa); border-color: #9a9a9a; }
.c2v { font-family: "Liberation Mono", monospace; font-size: 9px; font-weight: 700; fill: #222; }
.canvas { flex: 1; min-width: 0; overflow: hidden; }
.al { font-family: "Liberation Sans", Arial, sans-serif; font-size: 20px; text-anchor: middle; }
.al-w { fill: #f4f4f4; font-weight: 700; }
.al-d { fill: #333; }
.statusline { height: 50px; flex: none; background: #fff; font-size: 26px; line-height: 28px; color: #000; white-space: nowrap; }
.footer { height: 55px; flex: none; display: flex; align-items: center; justify-content: space-between; padding: 0 2px; }
.btns { display: flex; gap: 9px; transform: translateY(1px); }
.btn { height: 35px; padding: 0 14.500px; font-family: "Liberation Sans", Arial, sans-serif; font-size: 20px; color: #000; background: #f3f3f3; border: 2px solid #777; border-radius: 4px; white-space: nowrap; }

.calc { margin: 39px 0 0; font-family: "Liberation Sans", Arial, sans-serif; font-size: 48px; line-height: 56px; font-weight: 700; color: #fff; }
.collapse { display: block; margin-top: 38px; font-family: "Liberation Sans", Arial, sans-serif; font-size: 26px; line-height: 30px; color: #fff; }
.accordion {
  width: 2570px; height: 60px; margin: 3px 0 0 2px; border-radius: 10px 10px 0 0;
  background: linear-gradient(#4a80a8, #155a8c 60%);
  display: flex; align-items: flex-start; gap: 18px; padding: 12px 0 0 21px;
  font-family: "Liberation Sans", Arial, sans-serif; font-weight: 700; font-size: 24px; line-height: 30px; color: #fff;
}
.accordion svg { margin-top: 10px; }

/* Taskbar */
.taskbar { height: 80px; flex: none; background: linear-gradient(90deg, #401f1e, #322020 35%, #412220 70%, #3a2222); display: flex; color: #fff; }
.start { width: 96px; display: flex; align-items: center; justify-content: center; flex: none; background: #3f2120; }
.search { width: 688px; flex: none; background: #f1f1f1; border: 2px solid #c8c8c8; border-bottom-width: 3px; display: flex; align-items: center; padding-left: 21px; gap: 23px; color: #2a2a2a; font-size: 28px; }
.tb-apps { display: flex; flex: none; }
.app { width: 98px; height: 80px; display: flex; align-items: center; justify-content: center; border-bottom: 4px solid transparent; padding-top: 4px; }
.app-on { background: #5f4a48; border-bottom-color: #6fb1e6; }
.app-run { border-image: linear-gradient(90deg, transparent 6%, #6fb1e6 6%, #6fb1e6 88%, transparent 88%) 1; }
.tray { flex: 1; display: flex; align-items: center; padding-left: 78px; }
.weather { width: 142px; flex: none; display: flex; align-items: center; gap: 19px; font-size: 26px; }
.slot { width: 64px; flex: none; display: flex; justify-content: center; }
.clock { width: 128px; flex: none; text-align: center; font-size: 23px; line-height: 37px; }
.notif { position: relative; margin-left: 28px; }
.badge { position: absolute; right: -8px; bottom: -22px; width: 32px; height: 40px; border-radius: 50%; background: #3a3a3a; border: 2px solid #999; font-size: 24px; font-weight: 700; line-height: 36px; text-align: center; color: #fff; }
```
